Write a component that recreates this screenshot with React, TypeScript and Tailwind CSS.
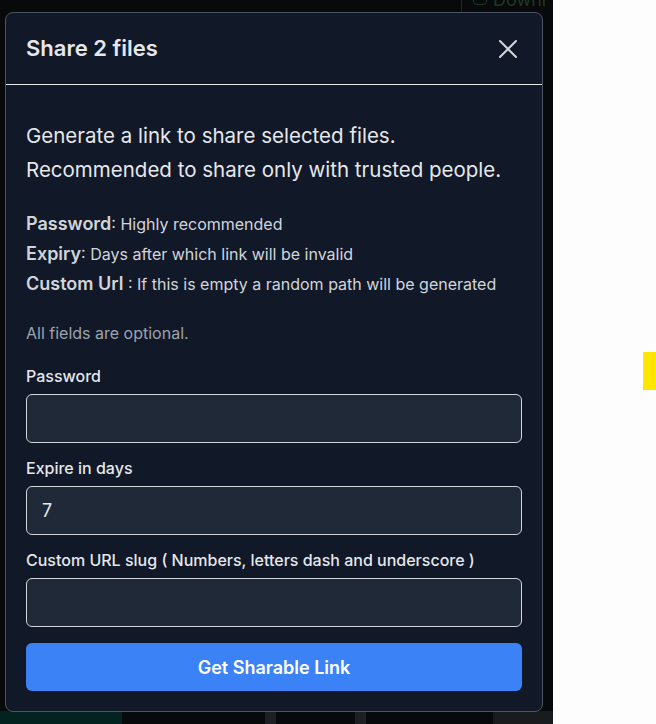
import React, { useState } from "react";

const ShareModal: React.FC = () => {
  const [password, setPassword] = useState("");
  const [expiry, setExpiry] = useState("7");
  const [slug, setSlug] = useState("");

  return (
    <div className="w-[538px] rounded-lg border border-[#4b5563] bg-[#111827] text-[#e5e7eb]">
      {/* header */}
      <div className="flex h-[72px] items-center justify-between border-b border-[#e5e7eb] pl-5 pr-6">
        <h2 className="text-[22px] font-semibold text-[#e5e7eb]">Share 2 files</h2>
        <button className="text-[#d1d5db]">
          <svg width="20" height="20" viewBox="0 0 20 20" fill="none" stroke="currentColor" strokeWidth="2" strokeLinecap="round">
            <path d="M2 2 L18 18 M18 2 L2 18" />
          </svg>
        </button>
      </div>

      {/* body */}
      <div className="px-5 pb-5 pt-[34px]">
        <p className="text-[20.5px] leading-[34px] text-[#e5e7eb]">
          Generate a link to share selected files.
          <br />
          Recommended to share only with trusted people.
        </p>

        <div className="mt-[22px] flex flex-col text-[16px] leading-[29px] text-[#d1d5db]">
          <div>
            <span className="text-[18px] font-semibold">Password</span>: Highly recommended
          </div>
          <div>
            <span className="text-[18px] font-semibold">Expiry</span>: Days after which link will be invalid
          </div>
          <div>
            <span className="text-[18px] font-semibold">Custom Url</span> : If this is empty a random path will be generated
          </div>
        </div>

        <p className="mt-[22px] text-[16px] leading-[24px] text-[#9ca3af]">All fields are optional.</p>

        <div className="mt-[19px] flex flex-col gap-[13px]">
          <label className="flex flex-col gap-[6px]">
            <span className="text-[16px] font-medium leading-[24px] text-[#e5e7eb]">Password</span>
            <input
              type="password"
              value={password}
              onChange={(e) => setPassword(e.target.value)}
              className="h-[49px] w-full rounded-md border border-[#d1d5db] bg-[#1f2937] px-4 text-[18px] text-[#e5e7eb] outline-none"
            />
          </label>
          <label className="flex flex-col gap-[6px]">
            <span className="text-[16px] font-medium leading-[24px] text-[#e5e7eb]">Expire in days</span>
            <input
              type="text"
              value={expiry}
              onChange={(e) => setExpiry(e.target.value)}
              className="h-[49px] w-full rounded-md border border-[#d1d5db] bg-[#1f2937] px-[15px] text-[18px] text-[#e5e7eb] outline-none"
            />
          </label>
          <label className="flex flex-col gap-[6px]">
            <span className="text-[16px] font-medium leading-[24px] text-[#e5e7eb]">
              Custom URL slug ( Numbers, letters dash and underscore )
            </span>
            <input
              type="text"
              value={slug}
              onChange={(e) => setSlug(e.target.value)}
              className="h-[49px] w-full rounded-md border border-[#d1d5db] bg-[#1f2937] px-4 text-[18px] text-[#e5e7eb] outline-none"
            />
          </label>
        </div>

        <button className="mt-[16px] h-[48px] w-full rounded-md bg-[#3b82f6] text-[18px] font-semibold text-white">
          Get Sharable Link
        </button>
      </div>
    </div>
  );
};

export default function App() {
  return (
    <div
      className="flex h-[724px] w-[656px] overflow-hidden bg-[#fdfdfd]"
      style={{ fontFamily: "Inter, 'Liberation Sans', sans-serif" }}
    >
      {/* dimmed app behind the dialog */}
      <div className="relative h-full w-[553px] shrink-0 bg-[#08090b]">
        <div className="absolute left-[461px] top-0 h-[22px] w-px bg-[#1c2a20]" />
        <div className="absolute left-[473px] top-[-9px] h-[14px] w-[14px] rounded-sm border border-[#1f3a24]" />
        <div className="absolute left-[493px] top-[-10px] text-[18px] leading-[20px] text-[#1f3a24]">Downl</div>
        <div className="absolute bottom-0 left-0 h-[13px] w-[122px] bg-[#032320]" />
        <div className="absolute bottom-0 left-[265px] h-[13px] w-[11px] bg-[#1e1f22]" />
        <div className="absolute bottom-0 left-[355px] h-[13px] w-[11px] bg-[#1e1f22]" />
        <div className="absolute bottom-0 left-[493px] h-[13px] w-[60px] bg-[#1a1b1d]" />
        <div className="absolute left-[5px] top-[12px]">
          <ShareModal />
        </div>
      </div>
      <div className="flex-1 pt-[352px]">
        <div className="ml-auto h-[38px] w-[13px] bg-[#ffe600]" />
      </div>
    </div>
  );
}
